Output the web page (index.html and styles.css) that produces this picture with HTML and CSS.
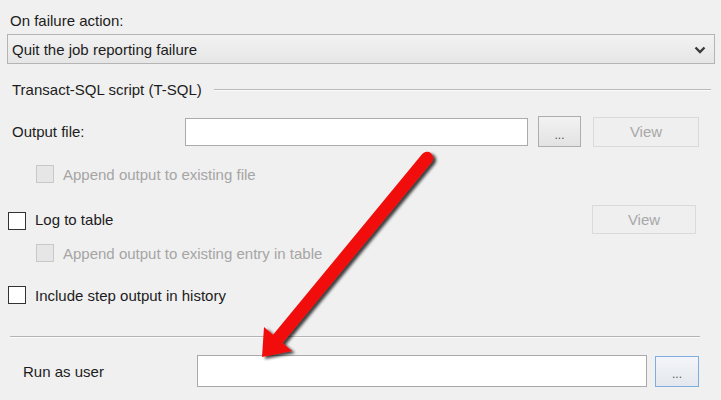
FILE: index.html
```html
<!DOCTYPE html>
<html>
<head>
<meta charset="utf-8">
<link rel="stylesheet" href="styles.css">
</head>
<body>
<div class="page">
  <div class="lbl-top">On failure action:</div>
  <div class="select">
    <span>Quit the job reporting failure</span>
    <svg class="chev" width="12" height="8" viewBox="0 0 12 8"><path d="M1.5 1.5 L6 6 L10.5 1.5" fill="none" stroke="#3a3a3a" stroke-width="2.4"/></svg>
  </div>
  <div class="group-head">
    <span>Transact-SQL script (T-SQL)</span>
    <div class="group-line"></div>
  </div>
  <div class="row-out">
    <span class="lbl-out">Output file:</span>
    <div class="input in-out"></div>
    <div class="btn btn-dots">...</div>
    <div class="btn btn-view">View</div>
  </div>
  <div class="row-chk sub r-append1">
    <div class="box dis"></div>
    <span class="dtext">Append output to existing file</span>
  </div>
  <div class="row-log">
    <div class="box"></div>
    <span class="ctext">Log to table</span>
    <div class="btn btn-view2">View</div>
  </div>
  <div class="row-chk sub r-append2">
    <div class="box dis"></div>
    <span class="dtext">Append output to existing entry in table</span>
  </div>
  <div class="row-chk r-include">
    <div class="box"></div>
    <span class="ctext">Include step output in history</span>
  </div>
  <div class="sep"></div>
  <div class="row-run">
    <span class="lbl-run">Run as user</span>
    <div class="input in-run"></div>
    <div class="btn btn-dots2">...</div>
  </div>
</div>
<svg class="arrow" width="721" height="400" viewBox="0 0 721 400">
  <defs>
    <filter id="sh" x="-20%" y="-20%" width="140%" height="140%">
      <feGaussianBlur in="SourceAlpha" stdDeviation="1.6"/>
      <feOffset dx="2.5" dy="2" result="b"/>
      <feComponentTransfer><feFuncA type="linear" slope="0.75"/></feComponentTransfer>
      <feMerge><feMergeNode/><feMergeNode in="SourceGraphic"/></feMerge>
    </filter>
  </defs>
  <g filter="url(#sh)">
    <line x1="427" y1="158" x2="276" y2="341" stroke="#f2100c" stroke-width="12.5" stroke-linecap="round"/>
    <polygon points="262,357 264,327 292,351" fill="#f2100c"/>
  </g>
</svg>
</body>
</html>
```

FILE: styles.css
```css
html, body {
  margin: 0;
  padding: 0;
  background: #f0f0f0;
}
body {
  width: 721px;
  height: 400px;
  overflow: hidden;
  position: relative;
  font-family: "Liberation Sans", Arial, sans-serif;
  font-size: 15px;
  color: #1c1c1c;
}
.page {
  display: flex;
  flex-direction: column;
}
.lbl-top {
  margin: 12px 0 0 10px;
  height: 17px;
  line-height: 17px;
}
.select {
  margin: 5px 0 0 7px;
  width: 702px;
  height: 28px;
  border: 1px solid #b4b4b4;
  background: linear-gradient(#f2f2f2, #e6e6e6);
  display: flex;
  align-items: center;
  justify-content: space-between;
  padding-left: 4px;
  box-sizing: content-box;
}
.select span { line-height: 17px; }
.chev { margin-right: 8px; margin-top: 1px; }
.group-head {
  margin: 16px 0 0 12px;
  height: 18px;
  display: flex;
  align-items: center;
}
.group-line {
  margin-left: 12px;
  width: 497px;
  height: 1px;
  background: #b9b9b9;
  border-bottom: 1px solid #fbfbfb;
  margin-top: 1px;
}
.row-out {
  margin-top: 18px;
  height: 31px;
  display: flex;
  align-items: center;
}
.lbl-out { margin-left: 12px; width: 173px; }
.input {
  background: #fff;
  border: 1px solid #ababab;
  box-sizing: border-box;
}
.in-out { width: 343px; height: 28px; }
.btn {
  box-sizing: border-box;
  display: flex;
  align-items: center;
  justify-content: center;
}
.btn-dots {
  margin-left: 10px;
  width: 43px;
  height: 31px;
  border: 1px solid #adadad;
  background: linear-gradient(#f2f2f2, #e3e3e3);
  font-size: 12px;
  color: #555;
  padding-top: 6px;
}
.btn-view {
  margin-left: 12px;
  width: 106px;
  height: 30px;
  border: 1px solid #dadada;
  background: #efefef;
  color: #a8a8a8;
}
.row-chk {
  display: flex;
  align-items: center;
  height: 20px;
}
.sub { padding-left: 36px; }
.r-append1 { margin-top: 17px; }
.box {
  width: 18px;
  height: 18px;
  box-sizing: border-box;
  border: 1px solid #333;
  background: #fff;
  flex: none;
}
.box.dis {
  border-color: #c8c8c8;
  background: #e6e6e6;
}
.dtext { margin-left: 9px; color: #a5a5a5; }
.ctext { margin-left: 9px; }
.row-log {
  margin-top: 21px;
  height: 29px;
  display: flex;
  align-items: center;
  padding-left: 8px;
}
.row-log .box { margin-top: 2px; }
.row-log .ctext { width: 557px; }
.btn-view2 {
  width: 104px;
  height: 29px;
  border: 1px solid #dadada;
  background: #efefef;
  color: #a8a8a8;
}
.r-append2 { margin-top: 9px; }
.r-include { margin-top: 22px; padding-left: 8px; }
.sep {
  margin: 31px 0 0 10px;
  width: 690px;
  height: 1px;
  background: #b4b4b4;
  border-bottom: 1px solid #fafafa;
}
.row-run {
  margin-top: 17px;
  height: 32px;
  display: flex;
  align-items: center;
}
.lbl-run { margin-left: 23px; width: 174px; }
.in-run { width: 450px; height: 32px; border-color: #a9a9a9; }
.btn-dots2 {
  margin-left: 8px;
  width: 44px;
  height: 31px;
  border: 1.5px solid #7eaee0;
  background: linear-gradient(#f3f5f8, #e4e8ee);
  font-size: 12px;
  color: #555;
  padding-top: 6px;
}
.arrow {
  position: absolute;
  left: 0;
  top: 0;
  pointer-events: none;
}
```
